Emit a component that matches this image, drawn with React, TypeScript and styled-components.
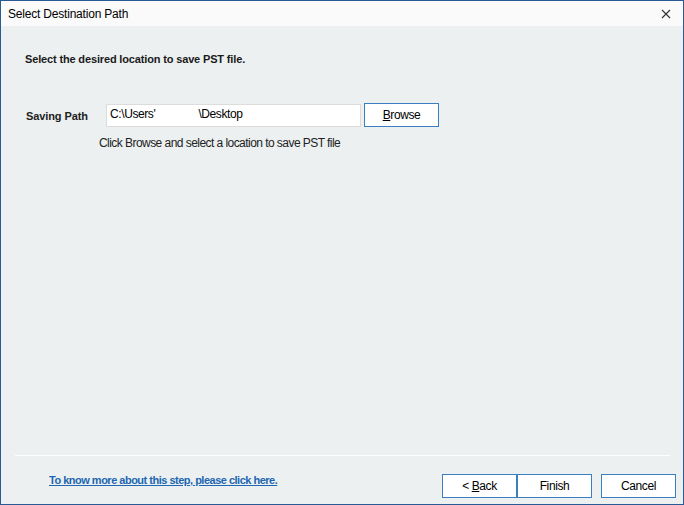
import React from 'react';
import styled, { createGlobalStyle } from 'styled-components';

const GlobalStyle = createGlobalStyle`
    html, body {
        margin: 0;
        padding: 0;
        background: #ffffff;
    }
    body {
        font-family: "Liberation Sans", Arial, sans-serif;
        font-size: 12px;
        color: #000;
    }
`;

const App = () => {
    return (
        <>
            <GlobalStyle />
            <Window>
                <TitleBar>
                    <Title>Select Destination Path</Title>
                    <CloseButton aria-label="Close">
                        <svg width="10" height="10" viewBox="0 0 10 10">
                            <path d="M1 1 L9 9 M9 1 L1 9" stroke="#333" strokeWidth="1.1" fill="none" />
                        </svg>
                    </CloseButton>
                </TitleBar>
                <Body>
                    <Heading>Select the desired location to save PST file.</Heading>
                    <PathRow>
                        <FieldLabel>Saving Path</FieldLabel>
                        <PathInput>
                            C:\Users'<Masked />\Desktop
                        </PathInput>
                        <DialogButton>
                            <u>B</u>rowse
                        </DialogButton>
                    </PathRow>
                    <Hint>Click Browse and select a location to save PST file</Hint>
                    <Spacer />
                    <Separator />
                    <Footer>
                        <HelpLink href="#">To know more about this step, please click here.</HelpLink>
                        <ButtonGroup>
                            <DialogButton>
                                &lt; <u>B</u>ack
                            </DialogButton>
                            <DialogButton>Finish</DialogButton>
                        </ButtonGroup>
                        <DialogButton>Cancel</DialogButton>
                    </Footer>
                </Body>
            </Window>
        </>
    );
};

export default App;

const Window = styled.div`
    width: 684px;
    height: 505px;
    box-sizing: border-box;
    border: 1px solid #2a5a95;
    display: flex;
    flex-direction: column;
    background: #ecf0f1;
`;

const TitleBar = styled.div`
    height: 25px;
    flex-shrink: 0;
    background: #fafafa;
    display: flex;
    align-items: center;
    justify-content: space-between;
    padding: 0 11px 0 7px;
`;

const Title = styled.span`
    font-size: 12px;
    letter-spacing: -0.2px;
    color: #000;
`;

const CloseButton = styled.span`
    display: flex;
    align-items: center;
    justify-content: center;
    width: 12px;
    height: 12px;
`;

const Body = styled.div`
    flex: 1;
    display: flex;
    flex-direction: column;
    padding: 27px 7px 6px 13px;
`;

const Heading = styled.div`
    font-weight: bold;
    font-size: 11px;
    letter-spacing: -0.15px;
    color: #1a1a1a;
    padding-left: 11px;
    height: 14px;
`;

const PathRow = styled.div`
    display: flex;
    align-items: center;
    margin-top: 36px;
    padding-left: 12px;
`;

const FieldLabel = styled.span`
    width: 80px;
    font-weight: bold;
    font-size: 11px;
    letter-spacing: -0.1px;
    color: #222;
    padding-top: 2px;
`;

const PathInput = styled.div`
    width: 255px;
    height: 23px;
    box-sizing: border-box;
    background: #fff;
    border: 1px solid #dcdcdc;
    display: flex;
    align-items: center;
    padding: 0 3px 2px;
    font-size: 12px;
    letter-spacing: -0.4px;
    color: #000;
    margin-right: 3px;
`;

const Masked = styled.span`
    display: inline-block;
    width: 46px;
    height: 14px;
    background: #fff;
    margin-left: 1px;
    margin-right: -4px;
`;

const DialogButton = styled.button`
    width: 75px;
    height: 24px;
    box-sizing: border-box;
    background: #fff;
    border: 1px solid #3c7fc1;
    font-family: "Liberation Sans", Arial, sans-serif;
    font-size: 12px;
    letter-spacing: -0.4px;
    color: #000;
    padding: 0;
    margin: 0;
    cursor: pointer;
`;

const Hint = styled.div`
    margin-top: 9px;
    padding-left: 85px;
    font-size: 12px;
    letter-spacing: -0.55px;
    color: #222;
`;

const Spacer = styled.div`
    flex: 1;
`;

const Separator = styled.div`
    height: 1px;
    background: #ffffff;
    margin: 0 6px 0 1px;
`;

const Footer = styled.div`
    display: flex;
    align-items: center;
    margin-top: 18px;
    padding-left: 35px;
`;

const HelpLink = styled.a`
    flex: 1;
    color: #2066b0;
    font-size: 11px;
    font-weight: bold;
    letter-spacing: -0.5px;
    text-decoration: underline;
    margin-top: -12px;
`;

const ButtonGroup = styled.div`
    display: flex;
    margin-right: 9px;
`;
